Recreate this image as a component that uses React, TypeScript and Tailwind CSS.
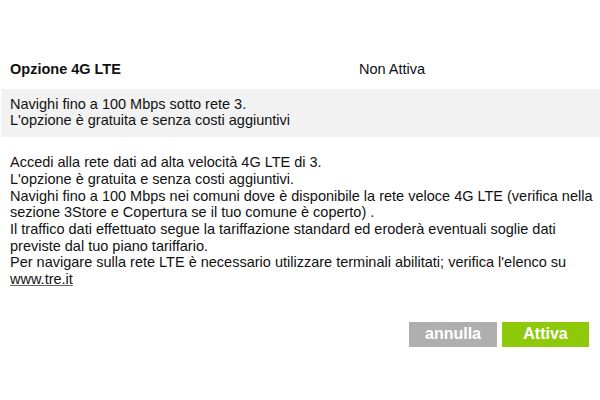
import React from 'react';

const App: React.FC = () => {
  return (
    <div className="w-[600px] h-[400px] bg-white text-[#111] font-['Liberation_Sans',Arial,sans-serif] text-[14.5px] leading-[16.7px] overflow-hidden">
      <div className="pt-[61px] flex items-center">
        <div className="w-[359px] pl-[10px] font-bold">Opzione 4G LTE</div>
        <div>Non Attiva</div>
      </div>
      <div className="mt-[11px] ml-[1px] bg-[#f2f2f2] pl-[9px] pt-[7px] pb-[8px]">
        <p>Navighi fino a 100 Mbps sotto rete 3.</p>
        <p>L'opzione è gratuita e senza costi aggiuntivi</p>
      </div>
      <div className="mt-[17px] pl-[10px] whitespace-nowrap">
        <p>Accedi alla rete dati ad alta velocità 4G LTE di 3.</p>
        <p>L'opzione è gratuita e senza costi aggiuntivi.</p>
        <p>
          Navighi fino a 100 Mbps nei comuni dove è disponibile la rete veloce 4G LTE (verifica nella
          <br />
          sezione 3Store e Copertura se il tuo comune è coperto) .
        </p>
        <p>
          Il traffico dati effettuato segue la tariffazione standard ed eroderà eventuali soglie dati
          <br />
          previste dal tuo piano tariffario.
        </p>
        <p>
          Per navigare sulla rete LTE è necessario utilizzare terminali abilitati; verifica l'elenco su
          <br />
          <a className="underline decoration-[#666]">www.tre.it</a>
        </p>
      </div>
      <div className="mt-[34px] flex justify-end gap-[5px] pr-[11px]">
        <button className="w-[88px] h-[25px] bg-[#afafaf] text-white font-bold text-[16px] leading-none">
          annulla
        </button>
        <button className="w-[87px] h-[25px] bg-[#8ec90c] text-white font-bold text-[16px] leading-none">
          Attiva
        </button>
      </div>
    </div>
  );
};

export default App;
